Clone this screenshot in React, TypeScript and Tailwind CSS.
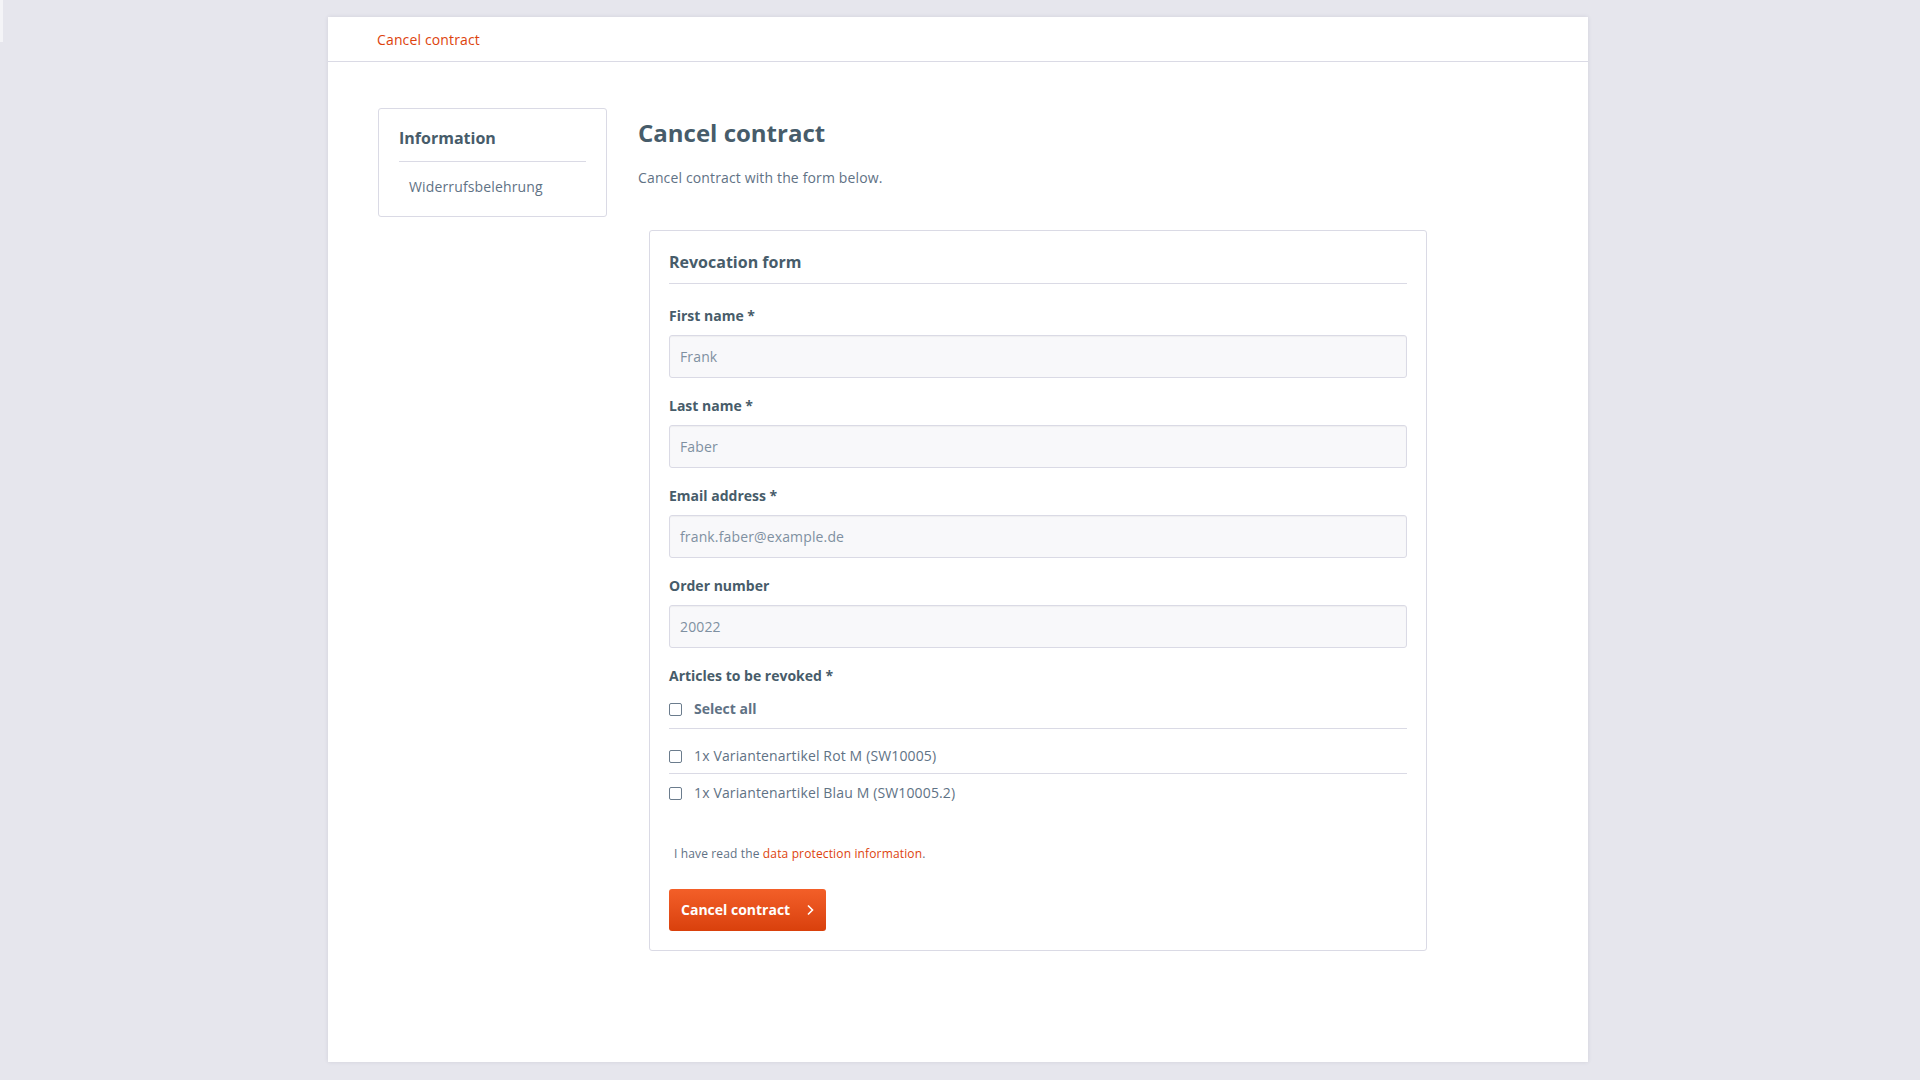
import type React from "react";

const fields = [
  { label: "First name *", value: "Frank" },
  { label: "Last name *", value: "Faber" },
  { label: "Email address *", value: "frank.faber@example.de" },
  { label: "Order number", value: "20022" },
];

const Checkbox: React.FC = () => (
  <span className="block w-[13px] h-[13px] shrink-0 rounded-[2px] border border-[#6b7c8d] bg-white" />
);

const App: React.FC = () => {
  return (
    <div
      className="relative min-h-[1080px] bg-[#e6e6ed] pt-[17px] pb-[18px] text-[14px] tracking-[0.14px] text-[#5f7285]"
      style={{ fontFamily: '"Open Sans", "Liberation Sans", sans-serif' }}
    >
      <div className="absolute left-0 top-0 w-[3px] h-[42px] bg-[#f4f4f7]" />
      <div className="ml-[328px] w-[1260px] h-[1045px] bg-white shadow-[0_0_4px_rgba(60,60,90,0.12)]">
        {/* breadcrumb */}
        <div className="h-[45px] border-b border-[#dadae5] pl-[49px] flex items-center">
          <a href="#" className="mt-[2px] text-[14px] leading-[20px] text-[#dd430d]">
            Cancel contract
          </a>
        </div>

        <div className="flex pl-[50px] pt-[46px]">
          {/* sidebar */}
          <aside className="w-[229px] h-[109px] border border-[#dadae5] rounded-[3px] px-[20px]">
            <div className="pt-[17px] pb-[11px] border-b border-[#dadae5] text-[16px] leading-[24px] font-bold tracking-normal text-[#475c6a]">
              Information
            </div>
            <a href="#" className="block pt-[15px] pl-[10px] leading-[20px] text-[#5f7285]">
              Widerrufsbelehrung
            </a>
          </aside>

          {/* main */}
          <main className="ml-[31px] flex flex-col">
            <h1 className="mt-[11px] text-[24px] leading-[28px] font-bold tracking-normal text-[#475c6a]">
              Cancel contract
            </h1>
            <p className="mt-[21px] leading-[20px]">Cancel contract with the form below.</p>

            <div className="mt-[42px] ml-[11px] w-[778px] border border-[#dadae5] rounded-[3px] px-[19px] pb-[19px]">
              <h2 className="pt-[19px] pb-[9px] border-b border-[#dadae5] text-[16px] leading-[24px] font-bold tracking-normal text-[#475c6a]">
                Revocation form
              </h2>

              <div className="pt-[22px]">
                {fields.map((f) => (
                  <div key={f.label} className="mb-[18px]">
                    <label className="block leading-[20px] font-bold tracking-normal text-[#475c6a]">
                      {f.label}
                    </label>
                    <div className="mt-[9px] h-[43px] flex items-center px-[10px] bg-[#f8f8fa] border border-[#dadae5] rounded-[3px] shadow-[inset_0_1px_1px_rgba(0,0,0,0.04)] text-[#7f90a1]">
                      {f.value}
                    </div>
                  </div>
                ))}

                <div className="leading-[20px] font-bold tracking-normal text-[#475c6a]">
                  Articles to be revoked *
                </div>

                <div className="mt-[13px] pb-[9px] border-b border-[#dadae5] flex items-center gap-[12px]">
                  <Checkbox />
                  <span className="leading-[20px] font-bold tracking-normal text-[#5f7285]">Select all</span>
                </div>

                <div className="pt-[17px] pb-[7px] border-b border-[#dadae5] flex items-center gap-[12px]">
                  <Checkbox />
                  <span className="leading-[20px]">1x Variantenartikel Rot M (SW10005)</span>
                </div>

                <div className="pt-[9px] flex items-center gap-[12px]">
                  <Checkbox />
                  <span className="leading-[20px]">1x Variantenartikel Blau M (SW10005.2)</span>
                </div>

                <p className="mt-[42px] pl-[5px] text-[12px] leading-[18px]">
                  I have read the{" "}
                  <a href="#" className="text-[#dd430d]">
                    data protection information
                  </a>
                  .
                </p>

                <button className="mt-[26px] h-[42px] w-[157px] rounded-[3px] bg-gradient-to-b from-[#f35f28] to-[#d9400b] text-white font-bold tracking-normal flex items-center pl-[12px]">
                  <span className="leading-[20px]">Cancel contract</span>
                  <svg
                    className="ml-[16px]"
                    width="8"
                    height="12"
                    viewBox="0 0 8 12"
                    fill="none"
                    stroke="white"
                    strokeWidth="1.6"
                  >
                    <polyline points="2,1.5 6.5,6 2,10.5" />
                  </svg>
                </button>
              </div>
            </div>
          </main>
        </div>
      </div>
    </div>
  );
};

export default App;
